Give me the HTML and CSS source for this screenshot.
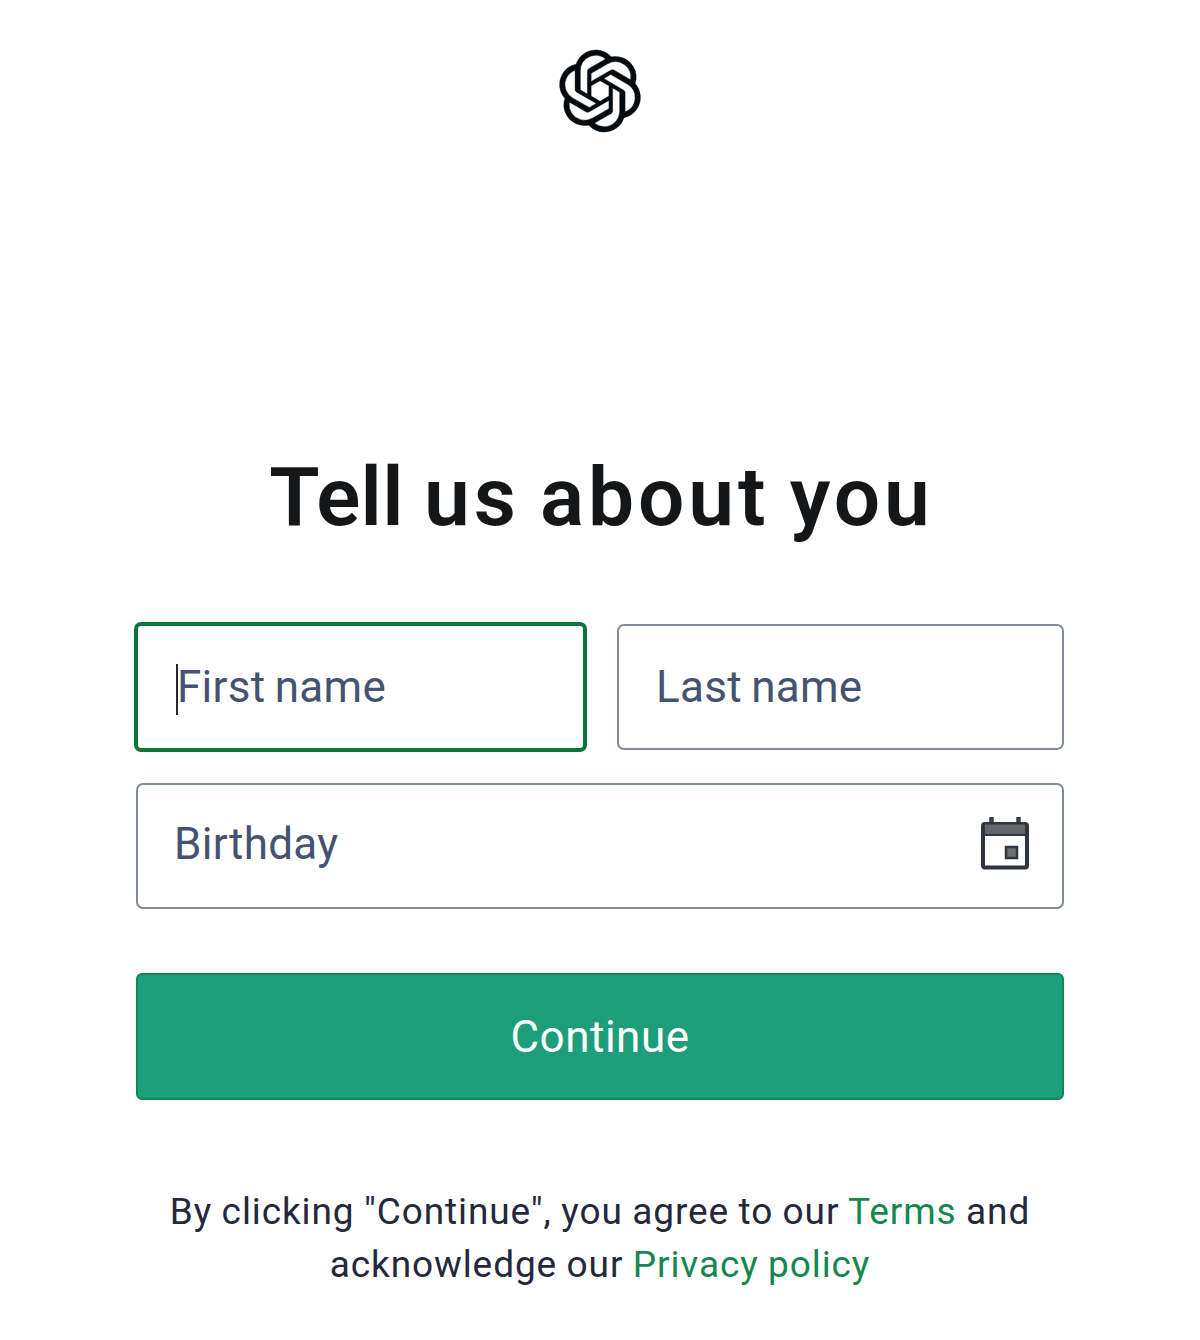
FILE: index.html
```html
<!DOCTYPE html>
<html lang="en">

<head>
  <meta charset="UTF-8">
  <meta name="viewport" content="width=device-width, initial-scale=1.0">
  <title>Tell us about you</title>
  <link rel="stylesheet" href="styles.css">
</head>

<body>
  <header class="header">
    <svg class="logo" viewBox="0 0 24 24" fill="currentColor" stroke="currentColor" stroke-width=".12" aria-hidden="true">
      <path d="M22.2819 9.8211a5.9847 5.9847 0 0 0-.5157-4.9108 6.0462 6.0462 0 0 0-6.5098-2.9A6.0651 6.0651 0 0 0 4.9807 4.1818a5.9847 5.9847 0 0 0-3.9977 2.9 6.0462 6.0462 0 0 0 .7427 7.0966 5.98 5.98 0 0 0 .511 4.9107 6.051 6.051 0 0 0 6.5146 2.9001A5.9847 5.9847 0 0 0 13.2599 24a6.0557 6.0557 0 0 0 5.7718-4.2058 5.9894 5.9894 0 0 0 3.9977-2.9001 6.0557 6.0557 0 0 0-.7475-7.0729zm-9.022 12.6081a4.4755 4.4755 0 0 1-2.8764-1.0408l.1419-.0804 4.7783-2.7582a.7948.7948 0 0 0 .3927-.6813v-6.7369l2.02 1.1686a.071.071 0 0 1 .038.052v5.5826a4.504 4.504 0 0 1-4.4945 4.4944zm-9.6607-4.1254a4.4708 4.4708 0 0 1-.5346-3.0137l.142.0852 4.783 2.7582a.7712.7712 0 0 0 .7806 0l5.8428-3.3685v2.3324a.0804.0804 0 0 1-.0332.0615L9.74 19.9502a4.4992 4.4992 0 0 1-6.1408-1.6464zM2.3408 7.8956a4.485 4.485 0 0 1 2.3655-1.9728V11.6a.7664.7664 0 0 0 .3879.6765l5.8144 3.3543-2.0201 1.1685a.0757.0757 0 0 1-.071 0l-4.8303-2.7865A4.504 4.504 0 0 1 2.3408 7.872zm16.5963 3.8558L13.1038 8.364 15.1192 7.2a.0757.0757 0 0 1 .071 0l4.8303 2.7913a4.4944 4.4944 0 0 1-.6765 8.1042v-5.6772a.79.79 0 0 0-.407-.667zm2.0107-3.0231l-.142-.0852-4.7735-2.7818a.7759.7759 0 0 0-.7854 0L9.409 9.2297V6.8974a.0662.0662 0 0 1 .0284-.0615l4.8303-2.7866a4.4992 4.4992 0 0 1 6.6802 4.66zM8.3065 12.863l-2.02-1.1638a.0804.0804 0 0 1-.038-.0567V6.0742a4.4992 4.4992 0 0 1 7.3757-3.4537l-.142.0805L8.704 5.459a.7948.7948 0 0 0-.3927.6813zm1.0976-2.3654l2.602-1.4998 2.6069 1.4998v2.9994l-2.5974 1.4997-2.6067-1.4997Z" />
    </svg>
  </header>

  <main class="main">
    <h1 class="title"><span class="title__first">Tell</span> us about you</h1>

    <form class="form">
      <div class="name-row">
        <div class="field field--active">
          <span class="caret"></span>
          <input class="input" type="text" placeholder="First name" aria-label="First name">
        </div>
        <div class="field">
          <input class="input" type="text" placeholder="Last name" aria-label="Last name">
        </div>
      </div>

      <div class="field field--birthday">
        <input class="input" type="text" placeholder="Birthday" aria-label="Birthday">
        <svg class="calendar" viewBox="0 0 48 54" aria-hidden="true">
          <path d="M10.5 0v8M37.5 0v8" stroke="#3a4048" stroke-width="4.5" />
          <rect x="2" y="7" width="44" height="43.5" rx="2" fill="#fff" stroke="#30363f" stroke-width="4" />
          <path d="M4 7.5h40v10H4z" fill="#63666b" />
          <path d="M4 18h40" stroke="#30363f" stroke-width="2" />
          <rect x="25" y="30" width="11" height="11" fill="#6c6f73" stroke="#30363f" stroke-width="2.5" />
        </svg>
      </div>

      <button class="button" type="button">Continue</button>
    </form>

    <p class="legal">
      By clicking "Continue", you agree to our <a href="#">Terms</a> and<br>
      acknowledge our <a href="#">Privacy policy</a>
    </p>
  </main>
</body>

</html>
```
FILE: styles.css
```css
* {
  box-sizing: border-box;
}

body {
  margin: 0;
  background: #fff;
  color: #25283a;
  font-family: Roboto, "Liberation Sans", sans-serif;
}

.header {
  display: flex;
  justify-content: center;
  padding-top: 50px;
}

.logo {
  display: block;
  width: 82px;
  height: 82px;
  color: #050b0e;
  overflow: visible;
}

.main {
  width: 928px;
  margin: 0 auto;
  padding-top: 315px;
}

.title {
  margin: 0;
  padding-left: 3px;
  color: #151617;
  font-size: 82px;
  font-weight: 600;
  line-height: 100px;
  letter-spacing: 3.9px;
  word-spacing: -4px;
  text-align: center;
  white-space: nowrap;
}

.title__first {
  letter-spacing: 0.3px;
}

.form {
  padding-top: 77px;
}

.name-row {
  display: grid;
  grid-template-columns: 449px 447px;
  gap: 32px;
}

.field {
  display: flex;
  align-items: center;
  height: 126px;
  padding: 0 33px 0 37px;
  border: 2px solid #808ba3;
  border-radius: 7px;
  position: relative;
}

/* the thicker border grows outwards so the row keeps its size */
.field--active {
  height: 130px;
  margin: -2px;
  padding-left: 39px;
  border: 4px solid #08763a;
}

.field--birthday {
  margin-top: 33px;
  padding-left: 36px;
  padding-bottom: 4px;
  border-color: #7e8b98;
}

.input {
  width: 100%;
  min-width: 0;
  padding: 0;
  border: 0;
  outline: 0;
  background: none;
  font-family: inherit;
  font-size: 44px;
  letter-spacing: 0.3px;
  word-spacing: -2px;
}

.input::placeholder {
  color: #465370;
  opacity: 1;
}

.caret {
  position: absolute;
  top: 38px;
  left: 38px;
  width: 2px;
  height: 51px;
  background: #25272b;
}

.calendar {
  flex: none;
  width: 48px;
  height: 54px;
}

.button {
  display: block;
  width: 100%;
  height: 127px;
  margin-top: 64px;
  padding: 0;
  border: 2px solid #118653;
  border-radius: 6px;
  background: #1c9e7a;
  color: #fff;
  font-family: inherit;
  font-size: 44px;
  letter-spacing: 0.5px;
}

.legal {
  margin: 0;
  padding-top: 85px;
  font-size: 37px;
  line-height: 53px;
  letter-spacing: 0.9px;
  word-spacing: -0.6px;
  text-align: center;
  white-space: nowrap;
}

.legal a {
  color: #178650;
  text-decoration: none;
}
```
